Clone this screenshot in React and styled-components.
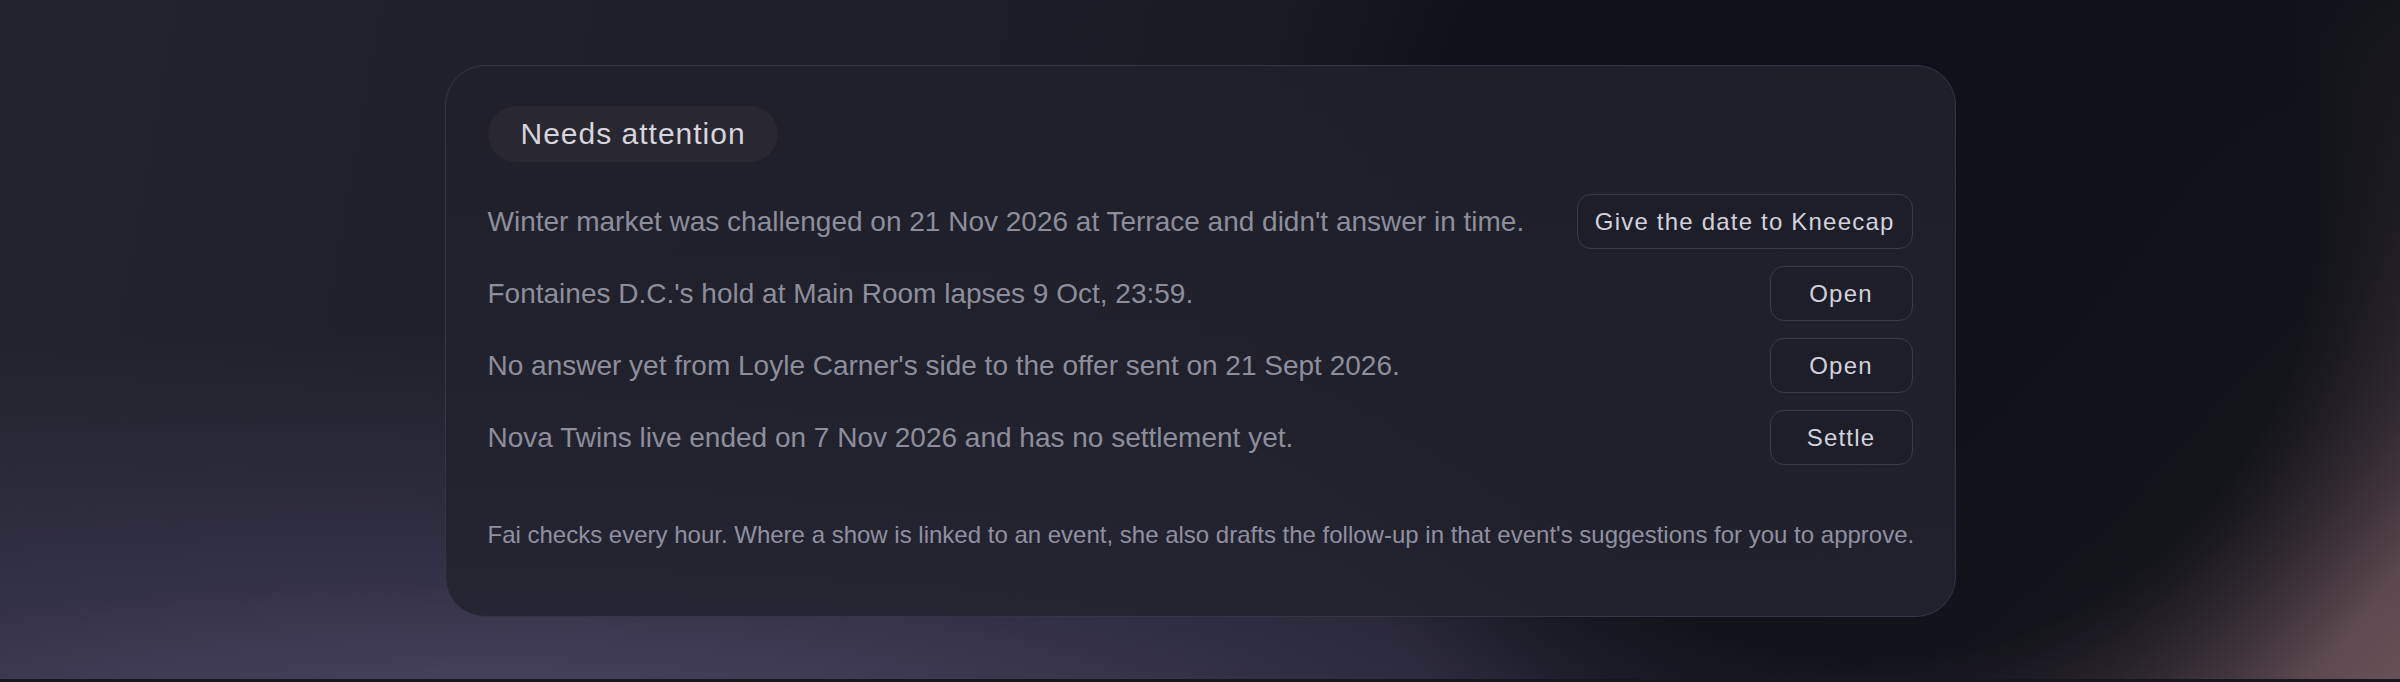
import React from 'react';
import styled, { createGlobalStyle } from 'styled-components';

const GlobalStyle = createGlobalStyle`
  html, body {
    margin: 0;
    padding: 0;
    background: #17171d;
  }
  * {
    box-sizing: border-box;
  }
`;

const Page = styled.div`
  height: 100vh;
  border-bottom: 3px solid #17171e;
  padding-top: 65px;
  font-family: "Liberation Sans", Arial, sans-serif;
  background-color: #1b1c24;
  background-image:
    radial-gradient(circle 640px at 1870px 210px, rgba(17, 18, 25, 1) 0%, rgba(17, 18, 25, 0.95) 70%, rgba(17, 18, 25, 0) 100%),
    radial-gradient(circle 760px at 2460px 720px, rgba(128, 100, 104, 0.85) 0%, rgba(100, 78, 86, 0.6) 45%, rgba(60, 50, 64, 0) 100%),
    radial-gradient(ellipse 2000px 420px at 500px 750px, rgba(82, 76, 110, 0.95) 0%, rgba(62, 58, 86, 0.6) 45%, rgba(40, 38, 56, 0) 100%),
    linear-gradient(100deg, #22232c 0%, #1c1d26 40%, #14151c 75%, #111219 100%);
`;

const Card = styled.section`
  width: 1511px;
  margin: 0 auto;
  padding: 40px 42px 65px;
  border: 1.5px solid #353545;
  border-radius: 40px;
  background: linear-gradient(180deg, rgba(31, 32, 41, 0.92) 0%, rgba(35, 35, 47, 0.88) 100%);
`;

const Badge = styled.div`
  display: inline-block;
  height: 56px;
  padding: 13px 32px 13px 33px;
  border-radius: 999px;
  background: #29272f;
  color: #d6d4de;
  font-size: 30px;
  line-height: 30px;
  letter-spacing: 1px;
`;

const List = styled.ul`
  list-style: none;
  margin: 32px 0 0;
  padding: 0;
  display: flex;
  flex-direction: column;
  gap: 17px;
`;

const Row = styled.li`
  display: flex;
  align-items: center;
  justify-content: space-between;
  gap: 24px;
`;

const RowText = styled.span`
  color: #8d8e9b;
  font-size: 28px;
  line-height: 32px;
`;

const Action = styled.button`
  flex-shrink: 0;
  height: 55px;
  min-width: 143px;
  padding: 0 17px;
  border: 1.5px solid #3a3a4b;
  border-radius: 14px;
  background: #1e1e29;
  color: #d2d2dc;
  font-family: inherit;
  font-size: 24px;
  line-height: 28px;
  letter-spacing: 1.2px;
  text-align: center;
  cursor: pointer;
`;

const Note = styled.p`
  margin: 54px 0 0;
  color: #9090a0;
  font-size: 24px;
  line-height: 32px;
  white-space: nowrap;
`;

const items = [
  { id: 1, text: "Winter market was challenged on 21 Nov 2026 at Terrace and didn't answer in time.", action: 'Give the date to Kneecap' },
  { id: 2, text: "Fontaines D.C.'s hold at Main Room lapses 9 Oct, 23:59.", action: 'Open' },
  { id: 3, text: "No answer yet from Loyle Carner's side to the offer sent on 21 Sept 2026.", action: 'Open' },
  { id: 4, text: 'Nova Twins live ended on 7 Nov 2026 and has no settlement yet.', action: 'Settle' },
];

export default function App() {
  return (
    <>
      <GlobalStyle />
      <Page>
        <Card>
          <Badge>Needs attention</Badge>
          <List>
            {items.map(item => (
              <Row key={item.id}>
                <RowText>{item.text}</RowText>
                <Action type="button">{item.action}</Action>
              </Row>
            ))}
          </List>
          <Note>
            Fai checks every hour. Where a show is linked to an event, she also drafts the follow-up in that event's suggestions for you to approve.
          </Note>
        </Card>
      </Page>
    </>
  );
}
